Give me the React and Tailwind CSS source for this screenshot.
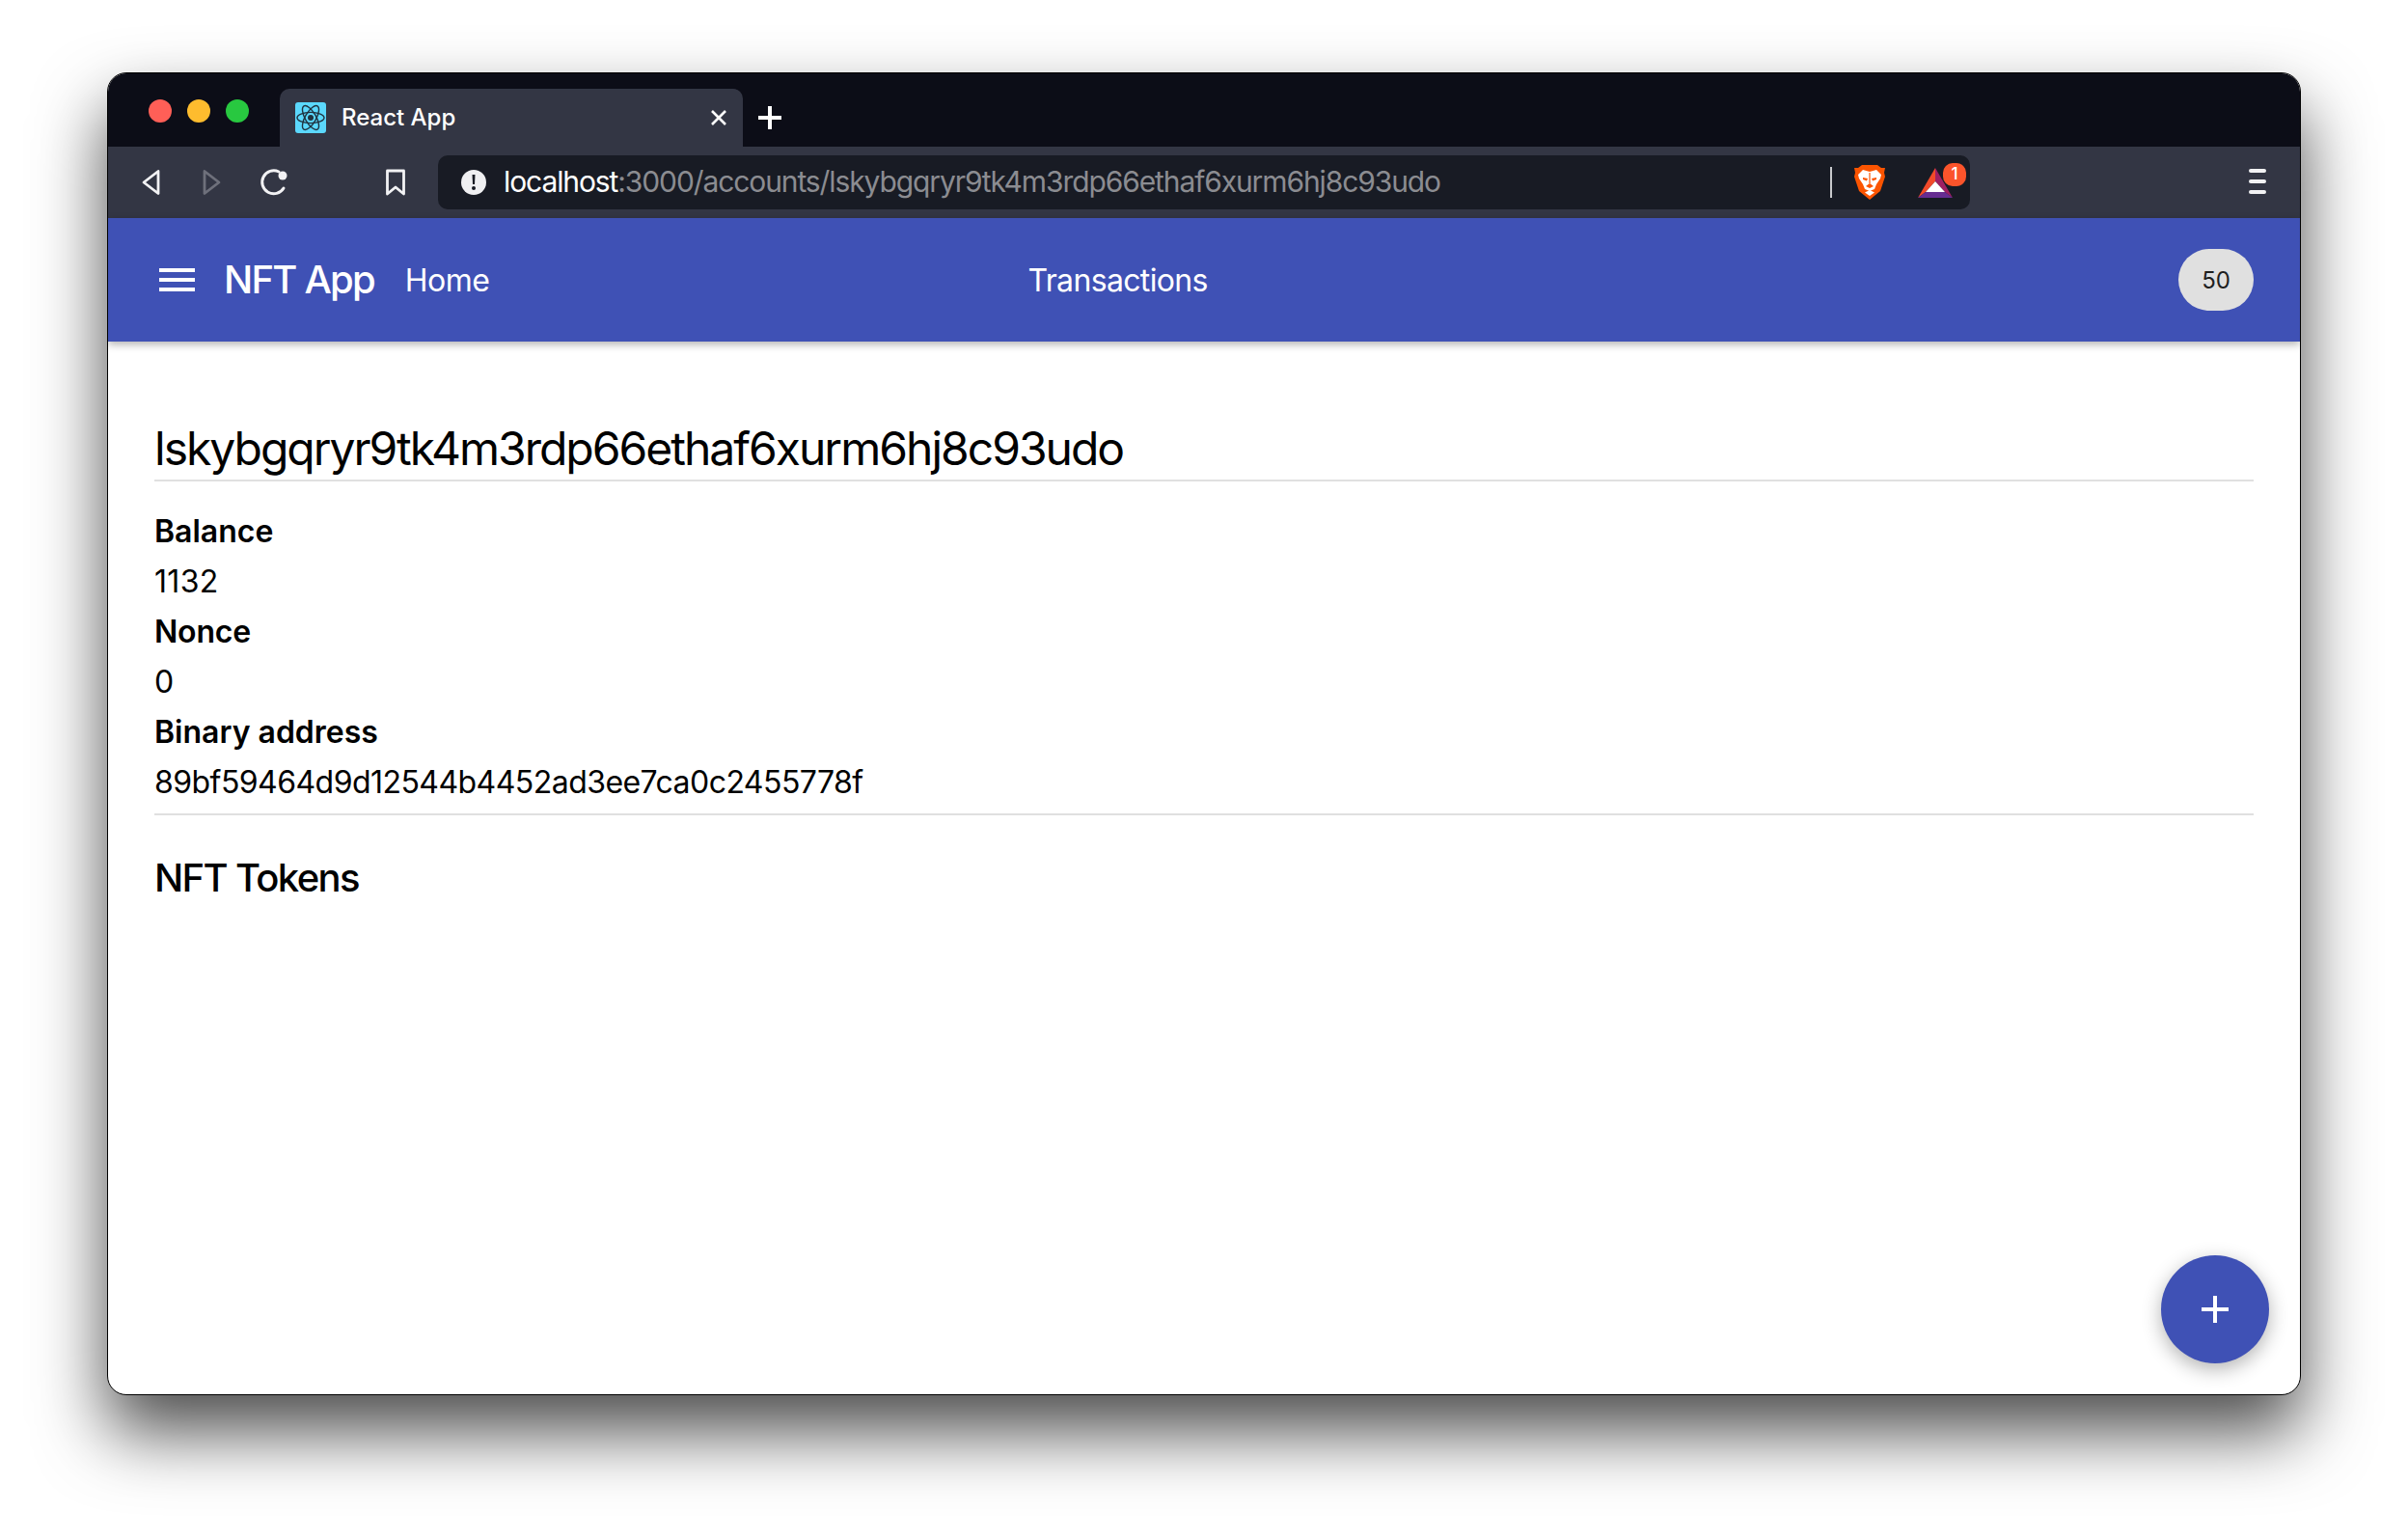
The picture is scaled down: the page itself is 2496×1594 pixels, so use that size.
import React from "react";

const Back = ({ flip, color }) => (
  <svg width="22" height="28" viewBox="0 0 22 28" fill="none" className={flip ? "-scale-x-100" : ""}>
    <path d="M19 2.5 L4 14 L19 25.5 Z" stroke={color} strokeWidth="2.8" strokeLinejoin="round" />
  </svg>
);

const Atom = () => (
  <svg width="32" height="32" viewBox="0 0 32 32" fill="none">
    <rect width="32" height="32" rx="3" fill="#5bd8fc" />
    <g stroke="#20323f" strokeWidth="1.4">
      <ellipse cx="16" cy="16" rx="14" ry="5.6" />
      <ellipse cx="16" cy="16" rx="14" ry="5.6" transform="rotate(60 16 16)" />
      <ellipse cx="16" cy="16" rx="14" ry="5.6" transform="rotate(120 16 16)" />
    </g>
    <circle cx="16" cy="16" r="3" fill="#20323f" />
  </svg>
);

const Lion = () => (
  <svg width="32" height="36" viewBox="0 0 32 36">
    <path d="M8 0 L24 0 L28 3 L32 3 L31 8 L32 12 L27 27 L16 36 L5 27 L0 12 L1 8 L0 3 L4 3 Z" fill="#fb5400" />
    <path d="M4 10 L9 5 L16 7 L23 5 L28 10 L27 14 L23 20 L21 25 L16 27 L11 25 L9 20 L5 14 Z" fill="#fff" />
    <path d="M9 13 L14 14 L13 16.5 L9 15 Z M23 13 L18 14 L19 16.5 L23 15 Z M15.4 8 L16.6 8 L16.6 19 L15.4 19 Z M12 22 L16 19 L20 22 L16 24 Z" fill="#fb5400" />
    <path d="M11 28.5 L16 26 L21 28.5 L16 32 Z" fill="#fff" />
  </svg>
);

const Bat = () => (
  <svg width="36" height="31" viewBox="0 0 36 31">
    <path d="M18 0 L18 14 L8 25 L0 31 Z" fill="#f14a2a" />
    <path d="M18 0 L36 31 L28 25 L18 14 Z" fill="#9e1f63" />
    <path d="M0 31 L8 25 L28 25 L36 31 Z" fill="#662d91" />
    <path d="M18 14 L28 25 L8 25 Z" fill="#fff" />
  </svg>
);

const Row = ({ bold, children, className = "" }) => (
  <div className={`h-[52px] leading-[52px] text-[32px] text-black ${bold ? "font-semibold" : "font-normal"} ${className}`}>{children}</div>
);

export default function App() {
  return (
    <div className="w-[2496px] h-[1594px] bg-white pt-[75px] pl-[111px] font-['Inter',sans-serif] overflow-hidden">
      <div className="relative w-[2274px] h-[1371px] rounded-[20px] border border-black bg-white overflow-hidden shadow-[0_38px_72px_rgba(0,0,0,0.7)] flex flex-col">
        {/* tab strip */}
        <div className="h-[76px] bg-[#0c0d17] flex items-end shrink-0">
          <div className="self-start mt-[27px] ml-[42px] flex gap-4">
            <div className="w-6 h-6 rounded-full bg-[#ff5f57]" />
            <div className="w-6 h-6 rounded-full bg-[#febc2e]" />
            <div className="w-6 h-6 rounded-full bg-[#28c840]" />
          </div>
          <div className="ml-8 w-[480px] h-[60px] rounded-t-[10px] bg-[#333644] flex items-center pl-4 pr-4">
            <Atom />
            <span className="ml-[16px] text-white text-[24px] font-medium">React App</span>
            <svg className="ml-auto" width="18" height="18" viewBox="0 0 18 18">
              <path d="M2 2 L16 16 M16 2 L2 16" stroke="#fff" strokeWidth="2.6" />
            </svg>
          </div>
          <svg className="ml-4 mb-[18px]" width="24" height="24" viewBox="0 0 24 24">
            <path d="M12 0 V24 M0 12 H24" stroke="#fff" strokeWidth="4" />
          </svg>
        </div>
        {/* toolbar */}
        <div className="h-[74px] bg-[#333644] flex items-center pl-3 shrink-0">
          <div className="w-16 flex justify-center"><Back color="#f2f2f4" /></div>
          <div className="w-16 flex justify-center"><Back flip color="#6e707b" /></div>
          <div className="w-16 flex justify-center">
            <svg width="30" height="30" viewBox="0 0 30 30" fill="none">
              <path d="M25 21 A12 12 0 1 1 20 4" stroke="#f2f2f4" strokeWidth="3" strokeLinecap="round" />
              <circle cx="24" cy="8" r="4.5" fill="#f2f2f4" />
            </svg>
          </div>
          <div className="ml-[62px] w-16 flex justify-center">
            <svg width="22" height="28" viewBox="0 0 22 28" fill="none">
              <path d="M2.5 2 H19.5 V26 L11 19 L2.5 26 Z" stroke="#f2f2f4" strokeWidth="2.8" strokeLinejoin="round" />
            </svg>
          </div>
          <div className="ml-3 relative w-[1588px] h-14 rounded-[10px] bg-[#181b24] flex items-center pl-6">
            <svg width="26" height="26" viewBox="0 0 26 26" className="shrink-0">
              <circle cx="13" cy="13" r="13" fill="#f0f0f2" />
              <path d="M11.5 5 H14.5 L14 15 H12 Z" fill="#181b24" />
              <circle cx="13" cy="19" r="2" fill="#181b24" />
            </svg>
            <span className="ml-[18px] text-[30px] leading-[36px] mb-[2px] tracking-[-1.1px] text-[#8b8c91] whitespace-nowrap">
              <span className="text-white">localhost</span>:3000/accounts/lskybgqryr9tk4m3rdp66ethaf6xurm6hj8c93udo
            </span>
            <div className="ml-auto w-0.5 h-8 bg-[#c8c9cc]" />
            <div className="ml-[23px]"><Lion /></div>
            <div className="ml-[34px] mr-[18px]"><Bat /></div>
            <div className="absolute right-1 top-2 w-6 h-6 rounded-[10px] bg-[#fb542b] text-white text-[17px] font-medium flex items-center justify-center">1</div>
          </div>
          <div className="ml-auto mr-[35px] mb-[2px] flex flex-col gap-[7px]">
            <div className="w-[18px] h-[4px] rounded-full bg-[#f2f2f4]" />
            <div className="w-[18px] h-[4px] rounded-full bg-[#f2f2f4]" />
            <div className="w-[18px] h-[4px] rounded-full bg-[#f2f2f4]" />
          </div>
        </div>
        {/* app bar */}
        <div className="relative z-10 h-[128px] bg-[#3f51b5] shadow-[0_3px_8px_rgba(0,0,0,0.3)] flex items-center pl-[53px] pr-12 shrink-0 text-white">
          <div className="w-[37px] flex flex-col gap-[6px]">
            <div className="h-1 bg-white" />
            <div className="h-1 bg-white" />
            <div className="h-1 bg-white" />
          </div>
          <span className="ml-[30px] text-[40px] leading-[48px] tracking-[-1.8px] font-medium">NFT App</span>
          <span className="ml-[32px] mt-[2px] text-[32px] tracking-[-0.5px]">Home</span>
          <span className="ml-[558px] mt-[2px] text-[32px] tracking-[-0.65px]">Transactions</span>
          <div className="ml-auto w-[78px] h-16 pt-[2px] rounded-full bg-[#e0e0e0] text-[#1f1f1f] text-[24px] flex items-center justify-center">50</div>
        </div>
        {/* content */}
        <div className="px-12 pt-[79px] flex-1">
          <div className="h-[66px] leading-[64px] text-[48px] tracking-[-2px] text-black border-b-2 border-[#e0e0e0]">lskybgqryr9tk4m3rdp66ethaf6xurm6hj8c93udo</div>
          <div className="mt-[26px]">
            <Row bold>Balance</Row>
            <Row className="tracking-[0.3px]">1132</Row>
            <Row bold className="tracking-[-0.2px]">Nonce</Row>
            <Row>0</Row>
            <Row bold>Binary address</Row>
            <Row className="tracking-[-0.55px]">89bf59464d9d12544b4452ad3ee7ca0c2455778f</Row>
          </div>
          <div className="mt-[6px] h-0.5 bg-[#e0e0e0]" />
          <div className="mt-[39px] h-[52px] leading-[52px] text-[40px] tracking-[-1.65px] font-medium text-black">NFT Tokens</div>
        </div>
        <div className="absolute right-[32px] bottom-[32px] w-28 h-28 rounded-full bg-[#3f51b5] shadow-[0_6px_20px_rgba(0,0,0,0.3)] flex items-center justify-center">
          <svg width="28" height="28" viewBox="0 0 28 28">
            <path d="M14 0 V28 M0 14 H28" stroke="#fff" strokeWidth="4" />
          </svg>
        </div>
      </div>
    </div>
  );
}
